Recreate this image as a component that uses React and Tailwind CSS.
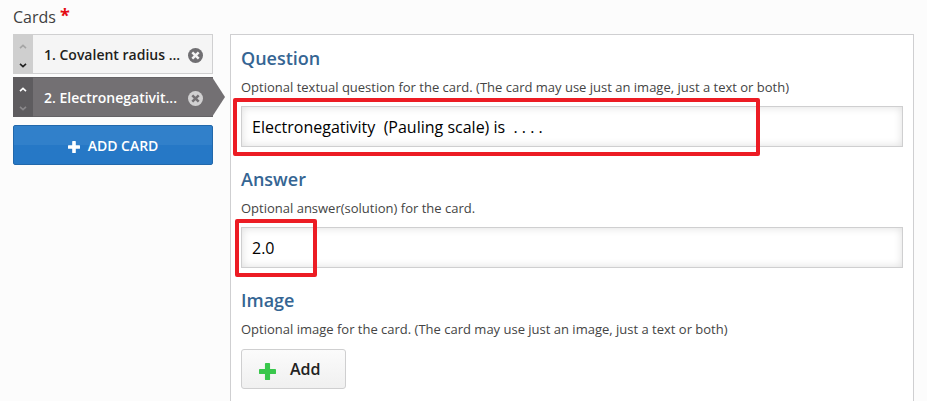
import { useState } from "react";

function Chevron({ up = false, className = "" }) {
  return (
    <svg viewBox="0 0 8 5" className={`h-[5px] w-2 ${className}`} fill="none" stroke="currentColor" strokeWidth="1.6" aria-hidden="true">
      <path d={up ? "M1 4.2 4 1.4 7 4.2" : "M1 .8 4 3.6 7 .8"} />
    </svg>
  );
}

function Plus({ className }) {
  return (
    <svg viewBox="0 0 12 12" className={className} fill="currentColor" aria-hidden="true">
      <path d="M4.8 0h2.4q.6 0 .6.6v3.6h3.6q.6 0 .6.6v2.4q0 .6-.6.6H7.8v3.6q0 .6-.6.6H4.8q-.6 0-.6-.6V7.8H.6Q0 7.8 0 7.2V4.8q0-.6.6-.6h3.6V.6q0-.6.6-.6Z" />
    </svg>
  );
}

function Remove({ label, className, cross }) {
  return (
    <button type="button" aria-label={label} className={`mt-[3px] mr-[9px] shrink-0 ${className}`}>
      <svg viewBox="0 0 14 14" className="size-[15px]" aria-hidden="true">
        <circle cx="7" cy="7" r="7" fill="currentColor" />
        <path d="m4 4 6 6m0-6-6 6" stroke={cross} strokeWidth="2.3" />
      </svg>
    </button>
  );
}

function CardTab({ title, selected = false }) {
  const tone = selected
    ? "border-[#656366] bg-[#737073] text-white"
    : "border-[#d0d0d1] bg-[#f5f5f5] text-[#1f1f20]";
  return (
    <li className={`relative flex h-10 items-center border-y border-r ${tone}`}>
      <div className={`-my-px flex h-10 w-5 shrink-0 flex-col items-center justify-between pt-[10px] pb-1.5 ${selected ? "bg-[#5e5c5f]" : "bg-[#cfcfcf]"}`}>
        <button type="button" aria-label="Move up"><Chevron up className={selected ? "text-white" : "text-[#a5a5a5]"} /></button>
        <button type="button" aria-label="Move down"><Chevron className={selected ? "text-[#8a888b]" : "text-[#222]"} /></button>
      </div>
      <button type="button" className="min-w-0 flex-1 pt-0.5 pl-[11px] text-left text-sm font-semibold whitespace-nowrap">
        {title}
      </button>
      <Remove label="Remove card" className={selected ? "text-[#d1d0d1]" : "text-[#706f72]"} cross={selected ? "#737073" : "#f5f5f5"} />
      {selected && (
        <svg viewBox="0 0 13 40" className="absolute -top-px left-full h-10 w-[13px]" aria-hidden="true">
          <path d="M0 0 13 20 0 40Z" fill="#737073" />
        </svg>
      )}
    </li>
  );
}

const heading = "block text-lg leading-6 font-semibold text-[#356593]";
const hint = "mt-2 text-[13px] leading-[18px] text-[#444]";

function TextField({ id, title, description, initial, highlight }) {
  const [value, setValue] = useState(initial);
  return (
    <section className="mb-5">
      <label htmlFor={id} className={heading}>{title}</label>
      <p id={`${id}-hint`} className={hint}>{description}</p>
      <div className="relative mt-[10px]">
        <input
          id={id}
          type="text"
          aria-describedby={`${id}-hint`}
          value={value}
          onChange={(e) => setValue(e.target.value)}
          className="block h-[41px] w-full border border-[#cfcfd0] bg-white px-[10px] text-base text-black shadow-[inset_0_0_8px_#dddddd] outline-none"
        />
        <div className={`pointer-events-none absolute rounded-xs border-4 border-[#ec1c24] ${highlight}`} />
      </div>
    </section>
  );
}

export default function App() {
  return (
    <div className="flex min-h-screen flex-col bg-[#fcfcfc] pr-[13px] pl-[13px] font-['Open_Sans',sans-serif]">
      <h1 className="flex h-[34px] items-start pt-[5px] text-base leading-6 font-normal text-[#3f3f41]">
        Cards<span className="ml-1 -mt-0.5 text-lg leading-6 font-bold text-[#e40b13]">*</span>
      </h1>
      <main className="flex flex-1 items-stretch gap-[17px]">
        <aside className="w-[200px] shrink-0">
          <ul className="flex flex-col gap-[3px]">
            <CardTab title="1. Covalent radius ..." />
            <CardTab title="2. Electronegativit..." selected />
          </ul>
          <button type="button" className="mt-2 flex h-10 w-full items-center justify-center gap-2 rounded-xs border border-[#2268ab] bg-linear-to-b from-[#3180ca] from-50% to-[#2678c6] to-50% pt-0.5 text-sm font-semibold text-white">
            <Plus className="mt-0.5 size-3" />
            ADD CARD
          </button>
        </aside>
        <div className="min-w-0 flex-1 border border-b-0 border-[#cfcfd1] bg-white px-[10px] pt-[11px] pb-2.5">
          <TextField
            id="question"
            title="Question"
            description="Optional textual question for the card. (The card may use just an image, just a text or both)"
            initial="Electronegativity  (Pauling scale) is  . . . ."
            highlight="-top-2 -bottom-[9px] -left-2 w-[527px] max-w-full"
          />
          <TextField
            id="answer"
            title="Answer"
            description="Optional answer(solution) for the card."
            initial="2.0"
            highlight="-top-2 -bottom-[9px] -left-1.5 w-[82px]"
          />
          <section>
            <h2 className={heading}>Image</h2>
            <p className={hint}>Optional image for the card. (The card may use just an image, just a text or both)</p>
            <button type="button" className="mt-[11px] flex h-10 w-[105px] items-center rounded-[3px] border border-[#cfcfd0] bg-linear-to-b from-[#fbfbfb] to-[#f0f0f0] pl-[17px] text-base font-semibold text-[#222]">
              <Plus className="mt-1 mr-[14px] size-[17px] text-[#39c74c]" />
              Add
            </button>
          </section>
        </div>
      </main>
    </div>
  );
}
